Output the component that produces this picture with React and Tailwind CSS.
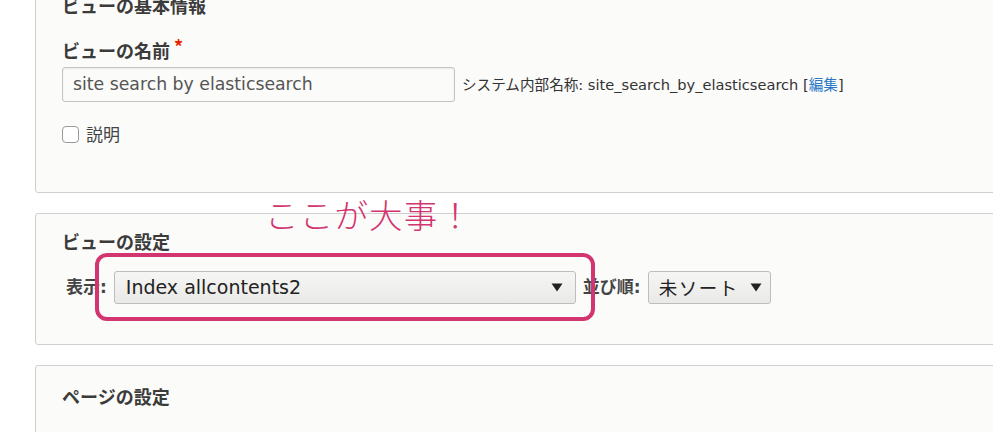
import React from "react";

const FONT = { fontFamily: '"DejaVu Sans", "Noto Sans CJK JP", sans-serif' };

function Caret() {
  return (
    <svg width="12" height="9" viewBox="0 0 12 9" className="shrink-0">
      <path d="M0.5 0.5 L11.5 0.5 L6 8.5 Z" fill="#222" />
    </svg>
  );
}

export default function App() {
  return (
    <div
      className="relative h-[432px] w-[993px] overflow-hidden bg-white text-[#333]"
      style={FONT}
    >
      {/* Panel 1 */}
      <div className="ml-[35px] -mt-[20px] w-[980px] rounded-[3px] border border-[#cfcfcd] bg-[#fbfbfa] pl-[26px] pt-[14px] pb-[48px]">
        <div className="h-[20px] text-[18px] font-bold leading-[20px] text-[#3b3b3b]" style={{ fontFamily: '"Noto Sans CJK JP", sans-serif' }}>
          ビューの基本情報
        </div>
        <div className="mt-[25px] flex h-[20px] items-center text-[18px] font-bold leading-[20px] text-[#3b3b3b]" style={{ fontFamily: '"Noto Sans CJK JP", sans-serif' }}>
          ビューの名前
          <span className="ml-[4px] -mt-[8px] text-[18px] text-[#e62600]">*</span>
        </div>
        <div className="mt-[7px] flex items-center">
          <div className="flex h-[35px] w-[393px] items-center rounded-[3px] border border-[#c4c4c2] bg-[#fbfbfa] pl-[10px] text-[17.3px] text-[#555] shadow-[inset_0_1px_2px_rgba(0,0,0,0.08)]">
            site search by elasticsearch
          </div>
          <div className="ml-[7px] text-[14.6px] text-[#333]">
            システム内部名称: site_search_by_elasticsearch [<span className="text-[#2a78c6]">編集</span>]
          </div>
        </div>
        <div className="mt-[22px] flex h-[20px] items-center">
          <div className="h-[17px] w-[17px] rounded-[4px] border border-[#9a9a9a] bg-white" />
          <span className="ml-[7px] text-[17px] text-[#444]" style={{ fontFamily: '"Noto Sans CJK JP", sans-serif' }}>
            説明
          </span>
        </div>
      </div>

      {/* Panel 2 */}
      <div className="ml-[35px] mt-[20px] w-[980px] rounded-[3px] border border-[#cfcfcd] bg-[#fbfbfa] pl-[26px] pt-[17px] pb-[40px]">
        <div className="h-[20px] text-[18px] font-bold leading-[20px] text-[#3b3b3b]" style={{ fontFamily: '"Noto Sans CJK JP", sans-serif' }}>
          ビューの設定
        </div>
        <div className="mt-[20px] flex items-center">
          <span className="ml-[4px] text-[17px] font-bold text-[#444]">表示:</span>
          <div className="ml-[7px] flex h-[33px] w-[462px] items-center justify-between rounded-[3px] border border-[#bdbdbb] bg-gradient-to-b from-[#f6f6f4] to-[#e9e9e7] pl-[11px] pr-[12px] text-[19px] text-[#222]">
            <span>Index allcontents2</span>
            <Caret />
          </div>
          <span className="ml-[7px] text-[17px] font-bold text-[#444]">並び順:</span>
          <div className="ml-[7px] flex h-[33px] w-[123px] items-center justify-between rounded-[3px] border border-[#bdbdbb] bg-gradient-to-b from-[#f6f6f4] to-[#e9e9e7] pl-[10px] pr-[8px] text-[18.5px] tracking-[1.5px] text-[#222]" style={{ fontFamily: '"Noto Sans CJK JP", sans-serif' }}>
            <span>未ソート</span>
            <Caret />
          </div>
        </div>
      </div>

      {/* Panel 3 */}
      <div className="ml-[35px] mt-[20px] h-[100px] w-[980px] rounded-[3px] border border-[#cfcfcd] bg-[#fbfbfa] pl-[26px] pt-[20px]">
        <div className="h-[20px] text-[18px] font-bold leading-[20px] text-[#3b3b3b]" style={{ fontFamily: '"Noto Sans CJK JP", sans-serif' }}>
          ページの設定
        </div>
      </div>

      {/* Annotation */}
      <div
        className="absolute left-[265px] top-[192px] text-[33.5px] font-light leading-[44px] tracking-[1.2px] text-[#d2356f]"
        style={{ fontFamily: '"Noto Sans CJK JP", sans-serif' }}
      >
        ここが大事！
      </div>
      <div className="absolute left-[95px] top-[253px] h-[68px] w-[500px] rounded-[12px] border-[4px] border-[#d2356f]" />
    </div>
  );
}
